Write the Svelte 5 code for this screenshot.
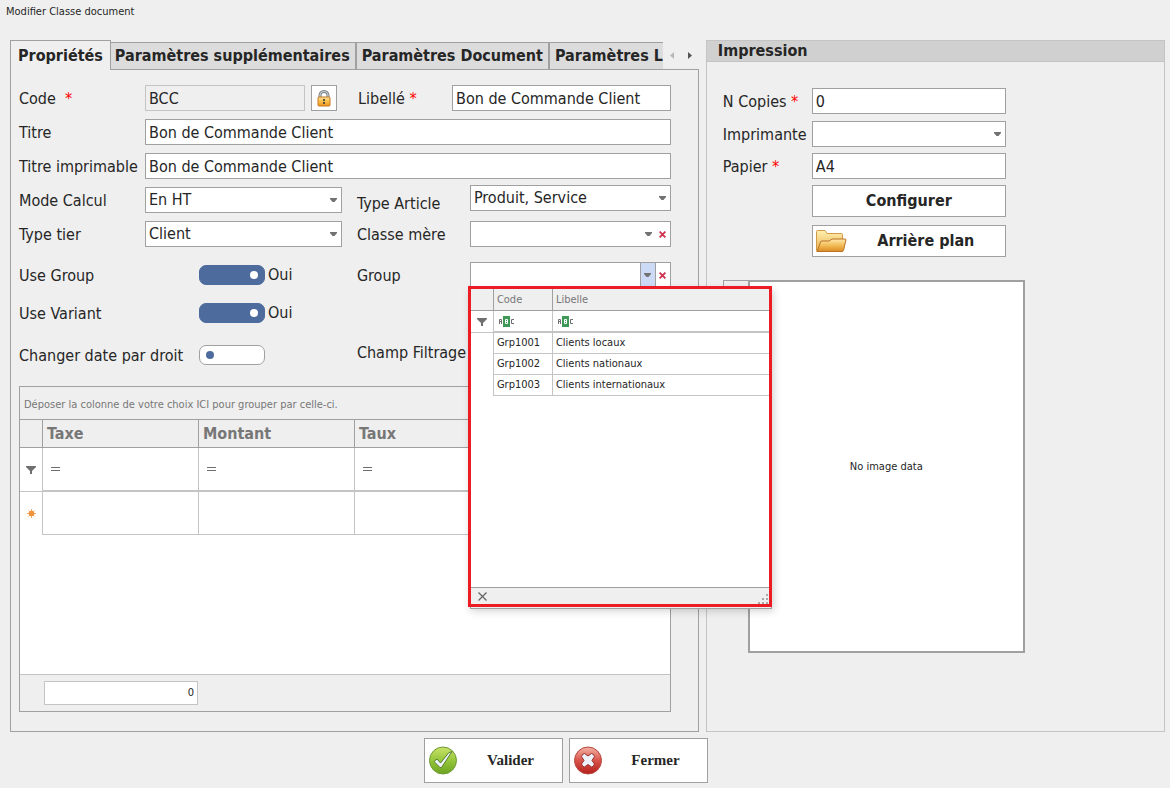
<script lang="ts">
    type TaxRow = { taxe: string; montant: string; taux: string };
    type Group = { code: string; libelle: string };

    const tabs = [
        "Propriétés",
        "Paramètres supplémentaires",
        "Paramètres Document",
        "Paramètres L",
    ];

    const groups: Group[] = [
        { code: "Grp1001", libelle: "Clients locaux" },
        { code: "Grp1002", libelle: "Clients nationaux" },
        { code: "Grp1003", libelle: "Clients internationaux" },
    ];

    let activeTab = $state(0);
    let code = $state("BCC");
    let libelle = $state("Bon de Commande Client");
    let titre = $state("Bon de Commande Client");
    let titreImprimable = $state("Bon de Commande Client");
    let modeCalcul = $state("En HT");
    let typeTier = $state("Client");
    let typeArticle = $state("Produit, Service");
    let classeMere = $state("");
    let group = $state("");
    let groupOpen = $state(true);
    let useGroup = $state(true);
    let useVariant = $state(true);
    let changerDate = $state(false);
    let copies = $state("0");
    let imprimante = $state("");
    let papier = $state("A4");
    let taxes: TaxRow[] = $state([]);

    function pickGroup(item: Group) {
        group = item.libelle;
        groupOpen = false;
    }
</script>

{#snippet caret()}
    <svg class="caret" width="7" height="4" viewBox="0 0 7 4" aria-hidden="true">
        <path d="M0 0h7v1L4.500 4h-2L0 1z" fill="#727272" />
    </svg>
{/snippet}

{#snippet cross()}
    <svg width="7" height="7" viewBox="0 0 7 7" aria-hidden="true">
        <path d="M0.6 0.6l5.8 5.8M6.4 0.6L0.6 6.4" stroke="#d0314c" stroke-width="1.8" />
    </svg>
{/snippet}

{#snippet funnel()}
    <svg width="10" height="8" viewBox="0 0 10 8" aria-hidden="true">
        <path d="M0 0h10v1L6 5v3H4V5L0 1z" fill="#6f6f6f" />
    </svg>
{/snippet}

{#snippet equals()}
    <svg class="equals" width="9" height="4" viewBox="0 0 9 4" aria-hidden="true">
        <path d="M0 0.5h9M0 3.5h9" stroke="#6f6f6f" />
    </svg>
{/snippet}

{#snippet contains()}
    <svg width="16" height="11" viewBox="0 0 16 11" aria-hidden="true">
        <rect x="4" width="7" height="11" fill="#3c9a56" />
        <path
            d="M0.5 8V3.5h2V8M1 5.5h1M15 3.5h-2.5v4H15"
            fill="none"
            stroke="#6f6f6f"
        />
        <path d="M6.5 3.5h2v4h-2zM7 5.5h1" fill="none" stroke="#fff" />
    </svg>
{/snippet}

<div class="window">
    <h1>Modifier Classe document</h1>

    <main>
        <section class="properties">
            <div class="tab-bar">
                <div class="tabs" role="tablist">
                    {#each tabs as tab, i}
                        <button
                            type="button"
                            role="tab"
                            class="tab"
                            class:active={i === activeTab}
                            aria-selected={i === activeTab}
                            onclick={() => (activeTab = i)}>{tab}</button
                        >
                    {/each}
                </div>
                <button type="button" class="scroll" aria-label="Onglet précédent" disabled>
                    <svg width="4" height="7" viewBox="0 0 4 7"><path d="M4 0v7L0 3.5z" fill="#b8b8b8" /></svg>
                </button>
                <button type="button" class="scroll" aria-label="Onglet suivant">
                    <svg width="4" height="7" viewBox="0 0 4 7"><path d="M0 0v7L4 3.5z" fill="#555" /></svg>
                </button>
            </div>

            <div class="page" role="tabpanel">
                <div class="form">
                    <div class="row">
                        <label for="code">Code &nbsp;<span class="required">*</span></label>
                        <input id="code" class="box code" bind:value={code} readonly />
                        <button type="button" class="lock" aria-label="Verrouiller le code">
                            <svg width="14" height="17" viewBox="0 0 14 17" aria-hidden="true">
                                <defs>
                                    <linearGradient id="brass" x2="0" y2="1">
                                        <stop offset="0" stop-color="#ffe49a" />
                                        <stop offset="0.5" stop-color="#fbbd45" />
                                        <stop offset="1" stop-color="#ee971c" />
                                    </linearGradient>
                                </defs>
                                <path d="M3 8V5.500a4 4 0 0 1 8 0V8" fill="none" stroke="#777e83" stroke-width="3" />
                                <path d="M3 8V5.500a4 4 0 0 1 8 0V8" fill="none" stroke="#c8d1d5" stroke-width="1.2" />
                                <rect x="1" y="7" width="12" height="9" rx="1" fill="url(#brass)" stroke="#c47720" />
                                <rect x="6" y="9" width="2" height="2" fill="#5a513d" />
                                <rect x="6" y="12" width="2" height="2" fill="#5a513d" />
                            </svg>
                        </button>
                        <label for="libelle" class="libelle">Libellé <span class="required">*</span></label>
                        <input id="libelle" class="box" bind:value={libelle} />
                    </div>
                    <div class="row">
                        <label for="titre">Titre</label>
                        <input id="titre" class="box" bind:value={titre} />
                    </div>
                    <div class="row">
                        <label for="titre-imprimable">Titre imprimable</label>
                        <input id="titre-imprimable" class="box" bind:value={titreImprimable} />
                    </div>

                    <div class="columns">
                        <div class="column">
                            <div class="row">
                                <label for="mode">Mode Calcul</label>
                                <div class="box combo">
                                    <select id="mode" bind:value={modeCalcul}>
                                        <option>En HT</option>
                                        <option>En TTC</option>
                                    </select>
                                    {@render caret()}
                                </div>
                            </div>
                            <div class="row">
                                <label for="tier">Type tier</label>
                                <div class="box combo">
                                    <select id="tier" bind:value={typeTier}>
                                        <option>Client</option>
                                        <option>Fournisseur</option>
                                    </select>
                                    {@render caret()}
                                </div>
                            </div>
                            <div class="switches">
                                <div class="switch-row">
                                    <label for="use-group">Use Group</label>
                                    <input id="use-group" type="checkbox" role="switch" bind:checked={useGroup} />
                                    {#if useGroup}<span>Oui</span>{/if}
                                </div>
                                <div class="switch-row">
                                    <label for="use-variant">Use Variant</label>
                                    <input id="use-variant" type="checkbox" role="switch" bind:checked={useVariant} />
                                    {#if useVariant}<span>Oui</span>{/if}
                                </div>
                                <div class="switch-row">
                                    <label for="changer-date">Changer date par droit</label>
                                    <input id="changer-date" type="checkbox" role="switch" bind:checked={changerDate} />
                                </div>
                            </div>
                        </div>

                        <div class="column right">
                            <div class="row article">
                                <label for="article">Type Article</label>
                                <div class="box combo">
                                    <select id="article" bind:value={typeArticle}>
                                        <option>Produit, Service</option>
                                        <option>Produit</option>
                                        <option>Service</option>
                                    </select>
                                    {@render caret()}
                                </div>
                            </div>
                            <div class="row">
                                <label for="classe">Classe mère</label>
                                <div class="box combo clearable">
                                    <select id="classe" bind:value={classeMere}>
                                        <option value=""></option>
                                    </select>
                                    {@render caret()}
                                    <button
                                        type="button"
                                        class="clear"
                                        aria-label="Effacer la classe mère"
                                        onclick={() => (classeMere = "")}>{@render cross()}</button
                                    >
                                </div>
                            </div>
                            <div class="row group">
                                <label for="group">Group</label>
                                <div class="box combo">
                                    <input id="group" bind:value={group} />
                                    <button
                                        type="button"
                                        class="open"
                                        aria-label="Choisir un groupe"
                                        aria-expanded={groupOpen}
                                        onclick={() => (groupOpen = !groupOpen)}>{@render caret()}</button
                                    >
                                    <button
                                        type="button"
                                        class="clear"
                                        aria-label="Effacer le groupe"
                                        onclick={() => (group = "")}>{@render cross()}</button
                                    >

                                    {#if groupOpen}
                                        <div class="popup">
                                            <table>
                                                <thead>
                                                    <tr>
                                                        <th class="indicator"></th>
                                                        <th class="code-col">Code</th>
                                                        <th>Libelle</th>
                                                    </tr>
                                                </thead>
                                                <tbody>
                                                    <tr class="filter">
                                                        <td class="indicator">{@render funnel()}</td>
                                                        <td>{@render contains()}</td>
                                                        <td>{@render contains()}</td>
                                                    </tr>
                                                    {#each groups as item}
                                                        <tr onclick={() => pickGroup(item)}>
                                                            <td class="indicator"></td>
                                                            <td>{item.code}</td>
                                                            <td>{item.libelle}</td>
                                                        </tr>
                                                    {/each}
                                                </tbody>
                                            </table>
                                            <div class="popup-footer">
                                                <button type="button" aria-label="Fermer la liste" onclick={() => (groupOpen = false)}>
                                                    <svg width="9" height="9" viewBox="0 0 9 9" aria-hidden="true">
                                                        <path d="M0.5 0.5l8 8M8.5 0.5l-8 8" stroke="#666" stroke-width="1.3" />
                                                    </svg>
                                                </button>
                                                <svg width="10" height="10" viewBox="0 0 10 10" aria-hidden="true">
                                                    <path
                                                        d="M8 0h2v2H8zM4 4h2v2H4zM8 4h2v2H8zM0 8h2v2H0zM4 8h2v2H4zM8 8h2v2H8z"
                                                        fill="#a8a8a8"
                                                    />
                                                </svg>
                                            </div>
                                        </div>
                                    {/if}
                                </div>
                            </div>
                            <div class="row filtrage"><span>Champ Filtrage</span></div>
                        </div>
                    </div>
                </div>

                <div class="grid">
                    <p>Déposer la colonne de votre choix ICI pour grouper par celle-ci.</p>
                    <table>
                        <thead>
                            <tr>
                                <th class="indicator"></th>
                                <th class="narrow">Taxe</th>
                                <th class="narrow">Montant</th>
                                <th>Taux</th>
                            </tr>
                        </thead>
                        <tbody>
                            <tr class="filter">
                                <td class="indicator">{@render funnel()}</td>
                                <td>{@render equals()}</td>
                                <td>{@render equals()}</td>
                                <td>{@render equals()}</td>
                            </tr>
                            {#each taxes as row}
                                <tr>
                                    <td class="indicator"></td>
                                    <td>{row.taxe}</td>
                                    <td>{row.montant}</td>
                                    <td>{row.taux}</td>
                                </tr>
                            {/each}
                            <tr>
                                <td class="indicator">
                                    <svg width="9" height="9" viewBox="0 0 9 9" aria-hidden="true">
                                        <path
                                            d="M4.500 0v9M0 4.500h9M1.500 1.500l6 6M7.500 1.500l-6 6"
                                            stroke="#f6ad66"
                                        />
                                        <circle cx="4.5" cy="4.5" r="2.800" fill="#f2923c" />
                                    </svg>
                                </td>
                                <td></td>
                                <td></td>
                                <td></td>
                            </tr>
                        </tbody>
                    </table>
                    <div class="summary">
                        <output>{taxes.length}</output>
                    </div>
                </div>
            </div>
        </section>

        <section class="printing">
            <h2>Impression</h2>
            <div class="print-form">
                <div class="row copies">
                    <label for="copies">N Copies <span class="required">*</span></label>
                    <input id="copies" class="box" bind:value={copies} />
                </div>
                <div class="row">
                    <label for="imprimante">Imprimante</label>
                    <div class="box combo">
                        <select id="imprimante" bind:value={imprimante}>
                            <option value=""></option>
                        </select>
                        {@render caret()}
                    </div>
                </div>
                <div class="row">
                    <label for="papier">Papier <span class="required">*</span></label>
                    <input id="papier" class="box" bind:value={papier} />
                </div>
                <button type="button" class="wide">Configurer</button>
                <button type="button" class="wide background">
                    <svg width="32" height="24" viewBox="0 0 32 24" aria-hidden="true">
                        <defs>
                            <linearGradient id="folder-back" x2="0" y2="1">
                                <stop offset="0" stop-color="#fff0b0" />
                                <stop offset="1" stop-color="#e9b04c" />
                            </linearGradient>
                            <linearGradient id="folder-front" x2="0" y2="1">
                                <stop offset="0" stop-color="#ffe9ae" />
                                <stop offset="0.5" stop-color="#f3bd58" />
                                <stop offset="1" stop-color="#d98a23" />
                            </linearGradient>
                        </defs>
                        <path
                            d="M1.5 21V2.500q0-1 1-1h7.500l2 3h14.500q1 0 1 1V11L24 22.500H2.500q-1 0-1-1z"
                            fill="url(#folder-back)"
                            stroke="#d29a48"
                        />
                        <path
                            d="M2 22.500L5.500 13q.4-1 1.500-1h7l3-2h13q1.200 0 .9 1L28.500 21.500q-.3 1-1.500 1z"
                            fill="url(#folder-front)"
                            stroke="#b87325"
                        />
                    </svg>
                    <span>Arrière plan</span>
                </button>
            </div>
            <div class="preview">
                <div class="gutter"></div>
                <div class="image">No image data</div>
            </div>
        </section>
    </main>

    <footer>
        <button type="button">
            <svg width="30" height="30" viewBox="0 0 30 30" aria-hidden="true">
                <defs>
                    <linearGradient id="green" x2="0" y2="1">
                        <stop offset="0" stop-color="#c9e36a" />
                        <stop offset="0.5" stop-color="#96c63a" />
                        <stop offset="1" stop-color="#6ca321" />
                    </linearGradient>
                </defs>
                <circle cx="15" cy="14.5" r="13.500" fill="url(#green)" stroke="#6f9a35" />
                <path
                    d="M6 15.500l3-2.500 3.500 4L20.500 7l3.500-1.500L13.500 21.500H12z"
                    fill="#edf1fa"
                    stroke="#55802a"
                    stroke-linejoin="round"
                />
            </svg>
            <span>Valider</span>
        </button>
        <button type="button">
            <svg width="30" height="30" viewBox="0 0 30 30" aria-hidden="true">
                <defs>
                    <linearGradient id="red" x2="0" y2="1">
                        <stop offset="0" stop-color="#f3b3a5" />
                        <stop offset="0.500" stop-color="#d9544a" />
                        <stop offset="1" stop-color="#b41f1b" />
                    </linearGradient>
                </defs>
                <circle cx="15" cy="14.5" r="13.500" fill="url(#red)" stroke="#b5463f" />
                <path
                    d="M8.500 10.500q.5-2.500 3-3L15 10l3.500-2.500q2.500.5 3 3L19 14.500l2.500 3.500q-.5 2.500-3 3L15 18.500 11.500 21q-2.500-.5-3-3l2.500-3.500z"
                    fill="#edf1fa"
                    stroke="#97302c"
                    stroke-linejoin="round"
                />
            </svg>
            <span>Fermer</span>
        </button>
    </footer>
</div>

<style>
    :global(body) {
        margin: 0;
        background: #efefef;
    }

    .window {
        --line: #a0a0a0;
        --soft-line: #c4c4c4;
        display: flex;
        flex-direction: column;
        min-height: 100vh;
        box-sizing: border-box;
        padding: 0 5px 5px 10px;
        color: #262626;
        font-family: Tahoma, "DejaVu Sans Condensed", "Noto Sans", sans-serif;
        font-size: 16px;
        line-height: 20px;
    }

    .window *,
    .window *::before,
    .window *::after {
        box-sizing: border-box;
    }

    button,
    input,
    select {
        margin: 0;
        padding: 0;
        border: 0;
        border-radius: 0;
        color: inherit;
        font: inherit;
        background: none;
    }

    h1 {
        margin: 0 0 0 -4px;
        height: 40px;
        padding-top: 4px;
        font-size: 11px;
        font-weight: 400;
        line-height: 16px;
    }

    main {
        flex: 1;
        display: grid;
        grid-template-columns: minmax(0, 3fr) minmax(0, 2fr);
        gap: 7px;
    }

    .properties {
        display: flex;
        flex-direction: column;
    }

    /* tabs */
    .tab-bar {
        display: flex;
        align-items: center;
        position: relative;
        z-index: 1;
        margin-bottom: -1px;
    }

    .tabs {
        flex: 1;
        display: flex;
        align-items: flex-end;
        overflow: hidden;
        height: 30px;
    }

    .tab {
        flex: none;
        height: 28px;
        padding: 0 5px;
        border: 1px solid var(--line);
        background: #dcdcdc;
        font-weight: 700;
        white-space: nowrap;
    }

    .tab.active {
        height: 30px;
        padding: 0 7px;
        border-bottom: 0;
        background: #efefef;
    }

    .tab.active + .tab {
        padding-left: 4px;
        border-left: 0;
    }

    .tab:last-child {
        padding-right: 0;
        border-right: 0;
    }

    .scroll {
        display: flex;
        justify-content: center;
        width: 18px;
    }

    .page {
        flex: 1;
        display: flex;
        flex-direction: column;
        padding: 15px 27px 19px 8px;
        border: 1px solid var(--line);
    }

    /* form */
    .form {
        display: flex;
        flex-direction: column;
        gap: 8px;
    }

    .row {
        display: flex;
        align-items: center;
    }

    .row > label {
        flex: none;
        width: 126px;
        padding-top: 2px;
        white-space: nowrap;
    }

    .required {
        color: #f00;
    }

    .box {
        flex: 1;
        min-width: 0;
        height: 26px;
        padding: 0 3px;
        border: 1px solid var(--line);
        background: #fff;
    }

    .box:read-only:is(input) {
        border-color: var(--soft-line);
        background: #efefef;
    }

    .code {
        flex: 0 1 160px;
    }

    .lock {
        display: grid;
        place-items: center;
        flex: none;
        width: 26px;
        height: 26px;
        margin-left: 6px;
        border: 1px solid var(--line);
        background: #fff;
    }

    .row > .libelle {
        width: 94px;
        margin-left: 21px;
    }

    .combo {
        display: flex;
        align-items: center;
        position: relative;
        padding-right: 4px;
    }

    .combo select,
    .combo input {
        flex: 1;
        min-width: 0;
        height: 100%;
        appearance: none;
        outline: none;
    }

    .caret {
        flex: none;
    }

    .clear {
        display: grid;
        place-items: center;
        width: 14px;
        height: 100%;
    }

    .clearable {
        padding-right: 0;
    }

    .clearable .clear {
        margin-left: 4px;
    }

    .columns {
        display: flex;
        gap: 15px;
    }

    .column {
        display: flex;
        flex-direction: column;
        flex: 323;
        gap: 8px;
        min-width: 0;
    }

    .column.right {
        flex: 314;
    }

    .right .row > label {
        width: 113px;
    }

    .right .article {
        height: 26px;
        margin-top: -2px;
        margin-bottom: 2px;
    }

    .right .article label {
        padding-top: 12px;
    }

    .switches {
        display: flex;
        flex-direction: column;
        gap: 18px;
        padding-top: 10px;
    }

    .switch-row {
        display: flex;
        align-items: center;
        gap: 3px;
        height: 20px;
    }

    .switch-row:last-child {
        margin-top: 4px;
    }

    .switch-row label {
        width: 177px;
        padding-top: 2px;
        white-space: nowrap;
    }

    .switch-row input {
        appearance: none;
        display: flex;
        align-items: center;
        justify-content: flex-start;
        width: 66px;
        height: 20px;
        padding: 0 6px;
        border: 1px solid var(--line);
        border-radius: 7px;
        background: #fff;
    }

    .switch-row input::before {
        content: "";
        width: 8px;
        height: 8px;
        border-radius: 50%;
        background: #4d6c9d;
    }

    .switch-row input:checked {
        justify-content: flex-end;
        border-color: #4d6c9d;
        background: #4d6c9d;
    }

    .switch-row input:checked::before {
        background: #fff;
    }

    .group {
        margin-top: 7px;
    }

    .group .combo {
        padding-right: 0;
    }

    .group .open {
        display: grid;
        place-items: center;
        width: 16px;
        height: 100%;
        border: solid var(--line);
        border-width: 0 1px;
        background: #ccdaf5;
    }

    .filtrage {
        height: 20px;
        margin-top: 47px;
        white-space: nowrap;
    }

    /* group lookup */
    .popup {
        position: absolute;
        top: 23px;
        left: -3px;
        z-index: 2;
        display: flex;
        flex-direction: column;
        width: 304px;
        height: 321px;
        border: 3px solid #ed1c24;
        background: #fff;
        box-shadow: 2px 4px 8px rgba(0, 0, 0, 0.18);
        font-size: 11px;
        line-height: 14px;
    }

    .popup::after {
        content: "";
        position: absolute;
        top: calc(100% + 3px);
        right: -3px;
        left: -1px;
        height: 2px;
        border: 1px solid var(--line);
        border-top: 0;
        background: #efefef;
    }

    table {
        width: 100%;
        border-collapse: separate;
        border-spacing: 0;
        table-layout: fixed;
    }

    th,
    td {
        padding: 0 3px;
        border: solid var(--soft-line);
        border-width: 0 1px 1px 0;
        text-align: left;
        background: #fff;
    }

    th {
        border-color: var(--line);
        color: #777;
        background: #efefef;
    }

    th:last-child,
    td:last-child {
        border-right: 0;
    }

    .indicator {
        width: 23px;
        padding: 0;
        text-align: center;
    }

    td.indicator {
        border-bottom: 0;
    }

    .filter td {
        border-bottom-width: 2px;
    }

    .filter td.indicator {
        border-bottom: 1px solid var(--soft-line);
    }

    td svg {
        display: block;
    }

    td.indicator svg {
        margin: 0 auto;
    }

    .popup th {
        height: 22px;
        font-weight: 400;
    }

    .popup .code-col {
        width: 59px;
    }

    .popup td {
        height: 21px;
    }

    .popup .filter td {
        height: 22px;
    }

    .popup td:not(.indicator) svg {
        margin-left: 2px;
    }

    .popup-footer {
        display: flex;
        justify-content: space-between;
        align-items: center;
        height: 17px;
        margin-top: auto;
        padding: 0 1px 0 7px;
        border-top: 1px solid var(--line);
        background: #efefef;
    }

    .popup-footer button {
        display: grid;
    }

    .popup-footer > svg {
        align-self: flex-end;
    }

    /* tax grid */
    .grid {
        flex: 1;
        display: flex;
        flex-direction: column;
        margin-top: 21px;
        border: 1px solid var(--line);
        background: #fff;
    }

    .grid p {
        margin: 0;
        padding: 10px 4px 7px;
        border-bottom: 1px solid var(--line);
        background: #efefef;
        color: #777;
        font-size: 11px;
        line-height: 15px;
    }

    .grid th {
        height: 28px;
        padding-left: 4px;
        font-size: 16px;
    }

    .grid .narrow {
        width: 156px;
    }

    .grid td {
        height: 43px;
    }

    .grid .filter td {
        height: 44px;
    }

    .equals {
        margin-left: 5px;
    }

    .summary {
        height: 37px;
        margin-top: auto;
        padding: 6px 24px;
        border-top: 1px solid var(--soft-line);
        background: #efefef;
    }

    .summary output {
        display: block;
        width: 154px;
        height: 24px;
        padding-right: 3px;
        border: 1px solid var(--soft-line);
        background: #fff;
        font-size: 11px;
        line-height: 22px;
        text-align: right;
    }

    /* printing */
    .printing {
        display: flex;
        flex-direction: column;
        border: 1px solid var(--soft-line);
    }

    h2 {
        margin: 0;
        padding: 0 11px;
        border-bottom: 1px solid var(--soft-line);
        background: #d0d0d0;
        font-size: 16px;
        line-height: 20px;
    }

    .print-form {
        display: flex;
        flex-direction: column;
        gap: 6px;
        width: 299px;
        padding: 26px 0 0 16px;
    }

    .print-form .row > label {
        width: 89px;
    }

    .copies {
        margin-bottom: 1px;
    }

    .wide {
        display: flex;
        align-items: center;
        justify-content: center;
        height: 32px;
        margin-left: 89px;
        border: 1px solid var(--line);
        background: #fff;
        font-weight: 700;
    }

    .background {
        margin-top: 2px;
        padding-left: 2px;
    }

    .background span {
        flex: 1;
    }

    .preview {
        display: flex;
        width: 318px;
        height: 373px;
        margin-top: 23px;
        padding-left: 16px;
    }

    .gutter {
        width: 25px;
        height: 26px;
        border: solid var(--line);
        border-width: 1px 0 0 1px;
    }

    .image {
        flex: 1;
        display: grid;
        place-items: center;
        border: 2px solid var(--line);
        background: #fff;
        font-size: 11px;
    }

    footer {
        display: flex;
        justify-content: center;
        gap: 6px;
        padding: 6px 44px 0 0;
    }

    footer button {
        display: flex;
        align-items: center;
        width: 139px;
        height: 45px;
        padding: 0 3px;
        border: 1px solid var(--line);
        background: #fff;
        font: 700 15px "Liberation Serif", serif;
    }

    footer span {
        flex: 1;
        padding-left: 5px;
        text-align: center;
    }
</style>
